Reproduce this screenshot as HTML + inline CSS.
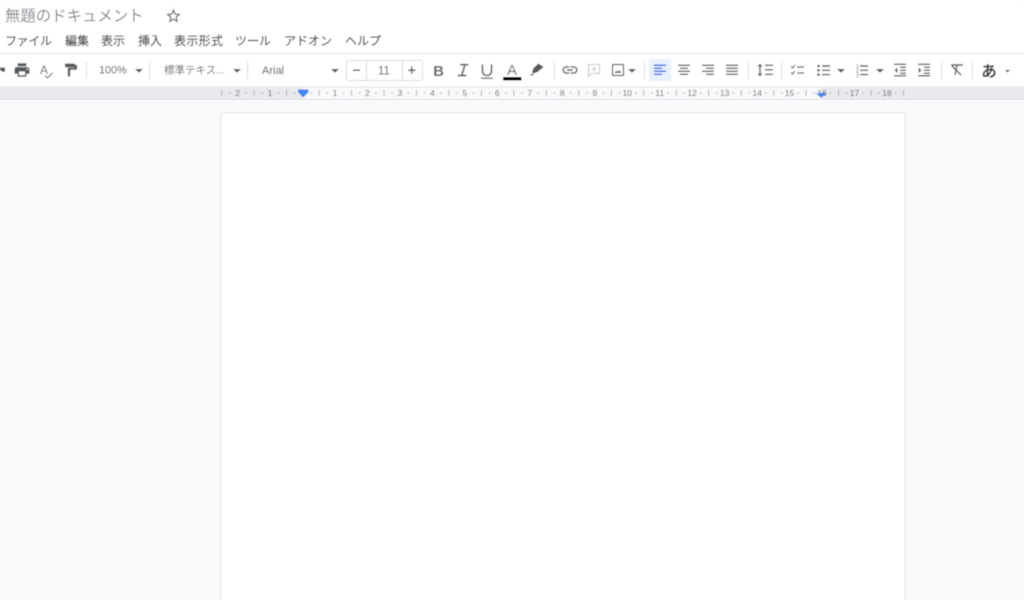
<!DOCTYPE html>
<html lang="ja">
<head>
<meta charset="utf-8">
<title>無題のドキュメント</title>
<style>
html,body{margin:0;padding:0;width:1024px;height:600px;overflow:hidden;background:#f8f9fa}
svg{display:block;position:absolute;left:0;top:0}
text{font-family:"Liberation Sans","Noto Sans CJK JP",sans-serif}
.m{font-size:12px;fill:#3c4043;stroke:#3c4043;stroke-width:.15}
.t{font-size:10.500px;fill:#444746}
.r{font-size:8.500px;fill:#5f6368;text-anchor:middle}
.i{fill:#55585b}
.s{stroke:#55585b;stroke-width:1.400;fill:none}
.d{fill:#dadce0}
</style>
</head>
<body>
<svg width="1024" height="600" viewBox="0 0 1024 600" xmlns="http://www.w3.org/2000/svg">
<defs>
<filter id="sh" x="-5%" y="-5%" width="110%" height="110%"><feDropShadow dx="0" dy="0" stdDeviation="1.200" flood-color="#3c4043" flood-opacity=".2"/></filter>
<filter id="b" x="0" y="0" width="100%" height="100%"><feGaussianBlur stdDeviation="0.420"/></filter>
<pattern id="tk" x="302.500" y="87" width="32.470" height="12" patternUnits="userSpaceOnUse">
<rect x="8.100" y="5" width=".8" height="2" fill="#9aa0a6"/>
<rect x="16.200" y="3" width=".8" height="6" fill="#9aa0a6"/>
<rect x="24.300" y="5" width=".8" height="2" fill="#9aa0a6"/>
</pattern>
</defs>

<rect width="1024" height="600" fill="#f8f9fa"/>
<rect x="221.500" y="113.500" width="683" height="490" fill="#fff" filter="url(#sh)"/>

<g filter="url(#b)">
<rect width="1024" height="87" fill="#fff"/>
<rect y="53" width="1024" height="1" fill="#e3e4e6"/>

<text x="5" y="21" font-size="15.400" fill="#80868b">無題のドキュメント</text>
<path d="M173.500 10.200l1.600 3.900 4.200.35-3.200 2.750.95 4.100-3.550-2.150-3.600 2.150.97-4.100-3.200-2.750 4.200-.35z" fill="none" stroke="#55585b" stroke-width="1.200"/>

<text class="m" x="5" y="45" textLength="47">ファイル</text>
<text class="m" x="65" y="45">編集</text>
<text class="m" x="101" y="45">表示</text>
<text class="m" x="138" y="45">挿入</text>
<text class="m" x="174" y="45" textLength="49">表示形式</text>
<text class="m" x="235" y="45" textLength="36">ツール</text>
<text class="m" x="284" y="45" textLength="48">アドオン</text>
<text class="m" x="345" y="45" textLength="36">ヘルプ</text>

<!-- undo/redo clipped -->
<path class="i" d="M0 67.500l5 0v4l-2 .5-3-2z"/>
<!-- print -->
<path class="i" transform="translate(13,61) scale(.75)" d="M19 8H5c-1.660 0-3 1.340-3 3v6h4v4h12v-4h4v-6c0-1.660-1.340-3-3-3zm-3 11H8v-5h8v5zm3-7c-.55 0-1-.45-1-1s.45-1 1-1 1 .45 1 1-.45 1-1 1zm-1-9H6v4h12V3z"/>
<!-- spell -->
<text x="40" y="74" font-size="12" fill="#5f6368">A</text>
<path d="M45 75.500l2.500 2.500 5-5" fill="none" stroke="#5f6368" stroke-width="1.100"/>
<!-- paint -->
<path class="i" d="M65 63.500h9.500v1.200h2.500v5h-6.800v6.800h-2.400v-8.800h6.800v-1.500h-.1v1h-9.500z"/>

<rect class="d" x="86" y="62" width="1" height="17"/>
<text class="t" x="99" y="73.500" style="font-size:10.800px">100%</text>
<path d="M135 69h8l-4 3.800z" class="i"/>
<rect class="d" x="149" y="62" width="1" height="17"/>
<text class="t" x="164" y="73.500" style="fill:#5f6368">標準テキス...</text>
<path d="M233 69h8l-4 3.800z" class="i"/>
<rect class="d" x="247" y="62" width="1" height="17"/>
<text class="t" x="262" y="74" style="font-size:11px">Arial</text>
<path d="M331 69h8l-4 3.800z" class="i"/>

<!-- font size -->
<rect x="346.500" y="60.500" width="76" height="20" rx="2" fill="#fff" stroke="#dadce0"/>
<rect class="d" x="366" y="61" width="1" height="19"/>
<rect class="d" x="402" y="61" width="1" height="19"/>
<rect class="i" x="353" y="69.500" width="7" height="1.500"/>
<text class="t" x="384" y="74.300" text-anchor="middle" style="font-size:11.500px">11</text>
<path class="i" d="M408 69.500h3v-3h1.500v3h3v1.500h-3v3h-1.500v-3h-3z"/>

<!-- B I U A pen -->
<text x="438.500" y="75.800" font-size="15" font-weight="700" text-anchor="middle" style="fill:#5f6368">B</text>
<path d="M460 64.700h8.500M457.800 75.500h8.500M465 64.700l-3.300 10.800" fill="none" stroke="#5f6368" stroke-width="1.700"/>
<path d="M482.500 64.500v6.500c0 6 9 6 9 0v-6.500" fill="none" stroke="#5f6368" stroke-width="1.600"/>
<rect x="481" y="77.500" width="12" height="1.300" fill="#5f6368"/>
<text x="512" y="75" font-size="15" text-anchor="middle" style="fill:#5f6368">A</text>
<rect x="503" y="77" width="18.500" height="3.500" fill="#000"/>
<path class="i" d="M532 72.500l1.500-4.500 5-4.500 5 3.500-6 5-4.500 1.500zM531 74h3l-1 1.500h-3z"/>

<rect class="d" x="554" y="62" width="1" height="17"/>
<path class="i" transform="translate(561,61) scale(.75)" d="M3.900 12c0-1.710 1.390-3.100 3.100-3.100h4V7H7c-2.760 0-5 2.240-5 5s2.240 5 5 5h4v-1.900H7c-1.710 0-3.100-1.390-3.100-3.100zM8 13h8v-2H8v2zm9-6h-4v1.900h4c1.710 0 3.100 1.390 3.100 3.100s-1.390 3.100-3.100 3.100h-4V17h4c2.760 0 5-2.240 5-5s-2.240-5-5-5z"/>
<path d="M588.500 64.500h11v9h-8l-3 2.500zM594 66.500v5M591.500 69h5" fill="none" stroke="#c4c7ca" stroke-width="1.100"/>
<rect x="612.500" y="64.500" width="11" height="11" rx="1" fill="none" stroke="#55585b" stroke-width="1.200"/>
<path class="i" d="M614.500 73l2-2.500 1.300 1.500 1.500-2 2 3z"/>
<path d="M628 69h8l-4 3.800z" class="i"/>
<rect class="d" x="644" y="62" width="1" height="17"/>

<!-- align -->
<rect x="649" y="59" width="22" height="22" rx="2" fill="#e8f0fe"/>
<path d="M654 65h12M654 68h8M654 71h12M654 74h8" stroke="#1a73e8" stroke-width="1.500" fill="none" transform="translate(0,.3)"/>
<path class="s" d="M678 65.300h12M680 68.300h8M678 71.300h12M680 74.300h8"/>
<path class="s" d="M702 65.300h12M706 68.300h8M702 71.300h12M706 74.300h8"/>
<path class="s" d="M726 65.300h12M726 68.300h12M726 71.300h12M726 74.300h12"/>
<rect class="d" x="748" y="62" width="1" height="17"/>

<!-- line spacing -->
<path class="s" d="M760 65v10" />
<path class="i" d="M757.500 66.500l2.500-3 2.500 3zM757.500 73.500l2.500 3 2.500-3z"/>
<path class="s" d="M765 65.300h8M765 69.800h8M765 74.300h8"/>
<rect class="d" x="781" y="62" width="1" height="17"/>

<!-- checklist -->
<path d="M791 66.500l1.500 1.500 2.500-3M791 72.500l1.500 1.500 2.500-3" fill="none" stroke="#55585b" stroke-width="1.100"/>
<path d="M797 67h7M797 73h7" stroke="#55585b" stroke-width="1.200"/>
<!-- bullets -->
<circle class="i" cx="818.500" cy="66" r="1.300"/><circle class="i" cx="818.500" cy="70.300" r="1.300"/><circle class="i" cx="818.500" cy="74.600" r="1.300"/>
<path class="s" d="M822 66h8M822 70.300h8M822 74.600h8"/>
<path class="i" d="M837 69h8l-4 3.800z"/>
<!-- numbered -->
<text x="856" y="68" font-size="5" fill="#55585b">1</text><text x="856" y="72.500" font-size="5" fill="#55585b">2</text><text x="856" y="77" font-size="5" fill="#55585b">3</text>
<path class="s" d="M860 66h8M860 70.300h8M860 74.600h8"/>
<path class="i" d="M876 69h8l-4 3.800z"/>
<!-- outdent -->
<path d="M894 64.800h12M900 67.800h6M900 70.800h6M900 73.800h6M894 76.300h12" stroke="#55585b" stroke-width="1.300" fill="none" transform="translate(0,-.5)"/>
<path class="i" d="M897.500 67.500v5.500l-3-2.700z"/>
<!-- indent -->
<path d="M918 64.800h12M924 67.800h6M924 70.800h6M924 73.800h6M918 76.300h12" stroke="#55585b" stroke-width="1.300" fill="none" transform="translate(0,-.5)"/>
<path class="i" d="M918.500 67.500v5.500l3-2.700z"/>
<rect class="d" x="941" y="62" width="1" height="17"/>

<!-- clear format -->
<path class="s" d="M951 65h12M957 65l-2 10M952 66l9 9"/>
<rect class="d" x="972" y="62" width="1" height="17"/>
<text x="989" y="76.500" font-size="15.500" font-weight="700" text-anchor="middle" fill="#333">あ</text>
<path class="i" d="M1005 70h5l-2.500 2.500z"/>

<!-- ruler -->
<rect y="87" width="1024" height="13" fill="#e8eaed"/>
<rect x="303" y="87" width="518" height="12" fill="#f8f9fa"/>
<rect y="86.500" width="1024" height="1" fill="#e3e4e6"/>
<rect y="99" width="1024" height="1" fill="#dadce0"/>
<rect x="221" y="87" width="684" height="12" fill="url(#tk)"/>
<g>
<text class="r" x="237.600" y="96">2</text><text class="r" x="270" y="96">1</text>
<text class="r" x="335" y="96">1</text><text class="r" x="367.400" y="96">2</text><text class="r" x="399.900" y="96">3</text><text class="r" x="432.400" y="96">4</text><text class="r" x="464.900" y="96">5</text><text class="r" x="497.300" y="96">6</text><text class="r" x="529.800" y="96">7</text><text class="r" x="562.300" y="96">8</text><text class="r" x="594.700" y="96">9</text><text class="r" x="627.200" y="96">10</text><text class="r" x="659.700" y="96">11</text><text class="r" x="692.100" y="96">12</text><text class="r" x="724.600" y="96">13</text><text class="r" x="757.100" y="96">14</text><text class="r" x="789.500" y="96">15</text><text class="r" x="822" y="96">16</text><text class="r" x="854.500" y="96">17</text><text class="r" x="887" y="96">18</text>
</g>
<path d="M298 89.500h10.500v2.500l-5.250 5.500-5.250-5.500z" fill="#4285f4"/>
<path d="M816 93h10.500l-5.250 5z" fill="#4285f4"/>
</g>
</svg>
</body>
</html>
